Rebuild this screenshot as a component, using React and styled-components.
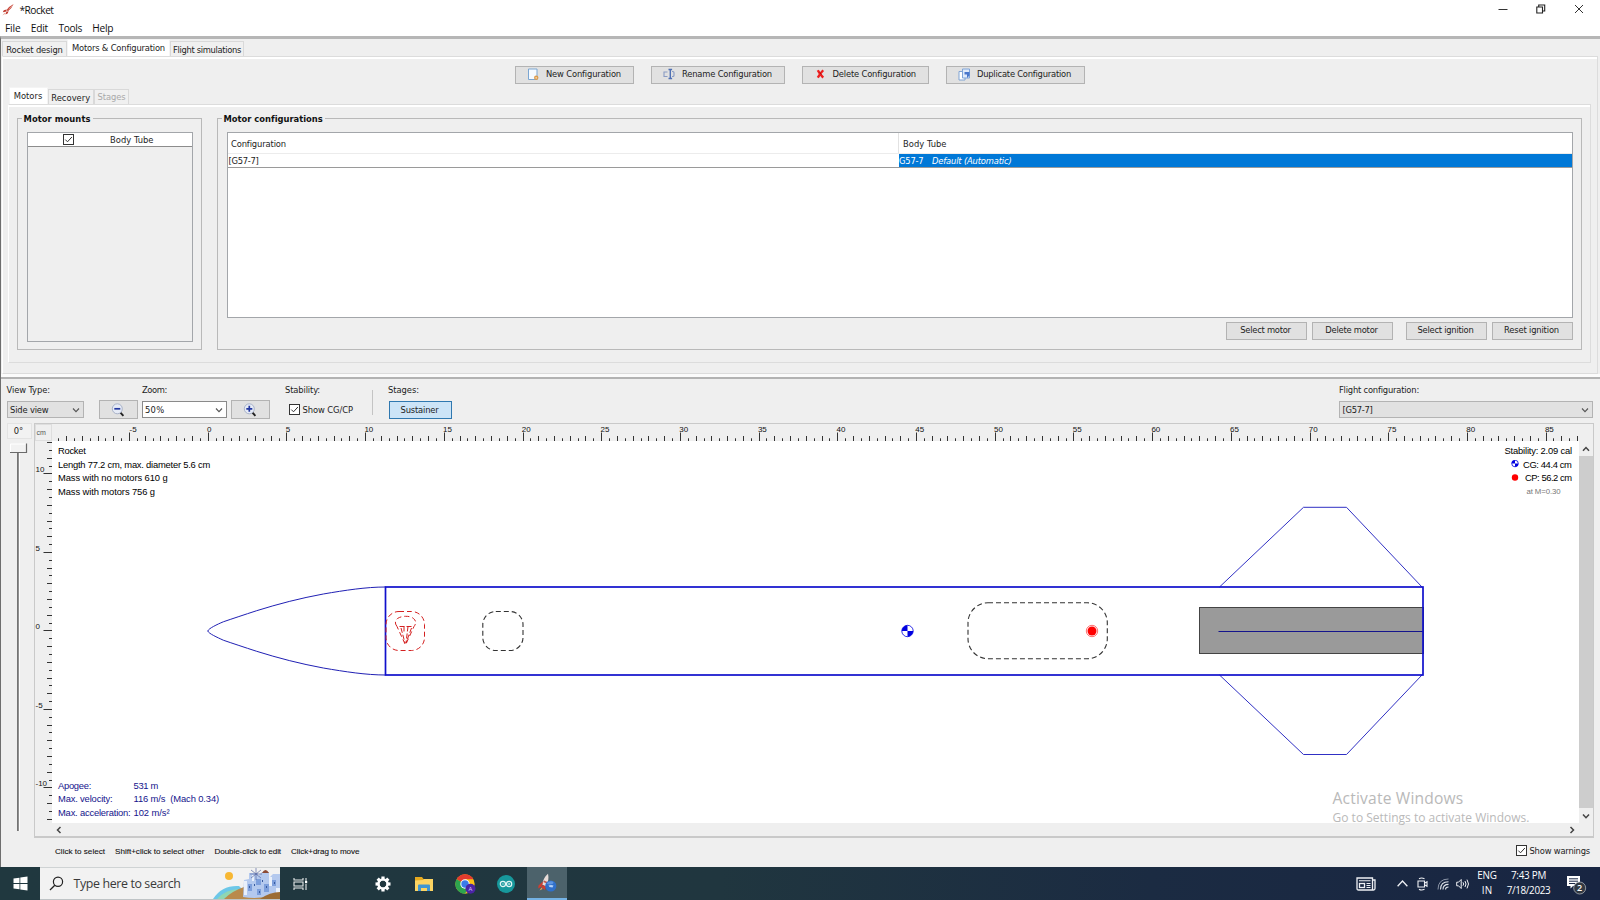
import React, { useLayoutEffect, useRef } from "react";
import styled, { createGlobalStyle, css } from "styled-components";

const UI = `"DejaVu Sans Condensed", "DejaVu Sans", sans-serif`;
const SEGOE = `"Open Sans", "Noto Sans", sans-serif`;
const ARIAL = `"Liberation Sans", Arial, sans-serif`;

const Global = createGlobalStyle`
  * { box-sizing: border-box; }
  html, body { margin: 0; padding: 0; overflow: hidden; }
  body { background: #efefef; }
  svg { display: block; flex: none; }
`;

/* ---------- text fitted to a fixed advance width ---------- */
const FitSpan = styled.span`
  display: inline-block;
  white-space: pre;
  flex: none;
`;
function Fit({ w, children }) {
  const ref = useRef(null);
  useLayoutEffect(() => {
    const el = ref.current;
    el.style.letterSpacing = "0px";
    const natural = el.getBoundingClientRect().width;
    el.style.letterSpacing = `${(w - natural) / el.textContent.length}px`;
  }, [w, children]);
  return <FitSpan ref={ref}>{children}</FitSpan>;
}

/* ---------- window frame ---------- */
const Window = styled.div`
  width: 1600px;
  height: 900px;
  display: flex;
  flex-direction: column;
  background: #efefef;
  font: 9.3px/12px ${UI};
  color: #1c1c1c;
  overflow: hidden;
`;
const TitleBar = styled.header`
  height: 19px;
  display: flex;
  align-items: center;
  padding-left: 2px;
  background: #fff;
  font: 10.2px/18px ${SEGOE};
  color: #111;
`;
const TitleText = styled.div`
  margin: 0 0 0 5.5px;
  flex: 1;
`;
const WindowButtons = styled.div`
  display: flex;
  gap: 28px;
  padding: 0 16px 2px 0;
`;
const MenuBar = styled.nav`
  height: 17px;
  display: flex;
  align-items: center;
  background: #fff;
  padding-left: 5px;
  font: 10.2px/16px ${SEGOE};
  color: #111;
`;
const MenuItem = styled.span`
  width: ${(p) => p.$w}px;
`;
const Body = styled.main`
  height: 831px;
  border-top: 3px solid #b6b6b6;
  border-left: 1px solid #6e6e6e;
  display: flex;
  flex-direction: column;
`;

/* ---------- tabs ---------- */
const TabStrip = styled.div`
  display: flex;
  align-items: flex-end;
  height: ${(p) => p.$h}px;
  padding-left: ${(p) => p.$pl}px;
`;
const Tab = styled.div`
  display: flex;
  align-items: center;
  justify-content: center;
  width: ${(p) => p.$w}px;
  height: ${(p) => (p.$active ? 18 : 15)}px;
  border: 1px solid #d9d9d9;
  border-bottom: 0;
  padding-top: ${(p) => p.$pt || 0}px;
  color: ${(p) => (p.$disabled ? "#a9a9a9" : "#1c1c1c")};
  background: #f0f0f0;
  ${(p) =>
    p.$active &&
    css`
      background: #fff;
      border-color: #f4f4f4;
      margin-bottom: -1px;
      padding-bottom: 1px;
    `}
`;
const Pane = styled.section`
  border: 1px solid #dcdcdc;
  border-left-color: #fff;
  box-shadow: inset 0 2px 0 #fff;
  margin: ${(p) => p.$m};
  height: ${(p) => p.$h}px;
  display: flex;
  flex-direction: column;
`;

/* ---------- controls ---------- */
const ButtonRow = styled.div`
  display: flex;
  gap: 17px;
  padding: 9px 0 0 512px;
  height: 31px;
`;
const Button = styled.button`
  font: inherit;
  color: inherit;
  margin: 0;
  padding: 0 ${(p) => p.$pr || 0}px 0 ${(p) => p.$pl || 0}px;
  width: ${(p) => p.$w}px;
  height: ${(p) => p.$h || 18}px;
  display: flex;
  flex: none;
  align-items: center;
  justify-content: ${(p) => (p.$pl ? "space-between" : "center")};
  background: #e1e1e1;
  border: 1px solid #b3b3b3;
  ${(p) => p.$flat && "padding-bottom: 2px;"}
  ${(p) =>
    p.$on &&
    css`
      background: #cce4f7;
      border-color: #2f78b0;
      padding-right: 2px;
    `}
`;
const Groups = styled.div`
  display: flex;
  padding: 13px 0 0 8px;
`;
const Group = styled.fieldset`
  margin: 0 ${(p) => p.$mr || 0}px 0 0;
  padding: 0;
  width: ${(p) => p.$w}px;
  height: 232px;
  min-width: 0;
  border: 1px solid #b9b9b9;
  position: relative;
  display: block;
`;
const GroupTitle = styled.div`
  position: absolute;
  top: -6px;
  left: 3.5px;
  padding: 0 2px;
  background: #efefef;
  font-weight: bold;
  color: #111;
`;
const MountTable = styled.div`
  margin: 13px 0 0 9px;
  width: 166px;
  height: 210px;
  border: 1px solid #a3a6aa;
`;
const MountRow = styled.div`
  height: 14px;
  background: #fff;
  border-bottom: 1px solid #8c8c8c;
  display: flex;
  align-items: center;
  padding-left: 35px;
  gap: 36px;
`;
const ConfigTable = styled.div`
  margin: 13px 0 0 9px;
  width: 1346px;
  height: 186px;
  background: #fff;
  border: 1px solid #a3a6aa;
`;
const ConfigRow = styled.div`
  display: grid;
  grid-template-columns: 671px 1fr;
  height: ${(p) => p.$h}px;
  border-bottom: 1px solid ${(p) => p.$line};
`;
const Cell = styled.div`
  display: flex;
  align-items: center;
  padding-left: ${(p) => p.$pl}px;
  padding-top: ${(p) => p.$pt || 0}px;
  gap: 8.5px;
  border-right: ${(p) => (p.$rule ? "1px solid #e2e2e2" : "0")};
  background: ${(p) => (p.$selected ? "#0078d7" : "transparent")};
  color: ${(p) => (p.$selected ? "#fff" : "inherit")};
`;
const MotorButtons = styled.div`
  display: flex;
  justify-content: flex-end;
  gap: 5px;
  padding: 4px 8px 0 0;
`;
const Gap = styled.div`
  width: ${(p) => p.$w}px;
`;
const Combo = styled.div`
  width: ${(p) => p.$w}px;
  height: 17px;
  display: flex;
  align-items: center;
  justify-content: space-between;
  padding: 0 3px 0 2.5px;
  border: 1px solid ${(p) => (p.$edit ? "#8a8a8a" : "#b3b3b3")};
  background: ${(p) => (p.$edit ? "#fff" : "#e1e1e1")};
`;
const CheckLabel = styled.label`
  display: flex;
  align-items: center;
  gap: 2.5px;
`;

/* ---------- lower half ---------- */
const Splitter = styled.div`
  height: 5px;
  background: #fbfbfb;
  border-bottom: 2px solid #b3b3b3;
`;
const Toolbar = styled.div`
  height: 44px;
  display: flex;
  padding: 5px 7px 0 5.5px;
`;
const Field = styled.div`
  width: ${(p) => p.$w}px;
  display: flex;
  flex-direction: column;
  align-items: flex-start;
`;
const FieldLabel = styled.div`
  height: 12px;
  padding-left: ${(p) => p.$pl || 0}px;
`;
const FieldRow = styled.div`
  height: 27px;
  display: flex;
  align-items: center;
  gap: 4px;
  padding-left: ${(p) => p.$pl || 0}px;
`;
const Divider = styled.div`
  width: 1px;
  height: 25px;
  background: #c4c4c4;
  margin: 6px 15px 0 0;
`;
const Viewer = styled.div`
  display: flex;
  height: 415px;
`;
const RotationColumn = styled.div`
  width: 33px;
  padding-left: 5.5px;
`;
const AngleBox = styled.div`
  width: 25px;
  height: 16px;
  border: 1px solid #e3e3e3;
  display: flex;
  align-items: center;
  justify-content: center;
  background: #f2f2f2;
  margin-bottom: 4px;
  padding-right: 1px;
`;
const Scroller = styled.div`
  width: 1560px;
  height: 415px;
  border: 1px solid #c9c9c9;
  border-bottom-width: 2px;
  display: grid;
  grid-template-columns: 17px 1527px 1fr;
  grid-template-rows: 17px 382px 13px;
`;
const Corner = styled.div`
  border: 1px solid #dedede;
  font: 7px/14px ${ARIAL};
  padding: 0.5px 0 0 0.5px;
  color: #555;
`;
const HRulerSlot = styled.div`
  grid-column: 2 / 4;
`;
const Canvas = styled.div`
  position: relative;
  background: #fff;
  font: 9.4px/13px ${ARIAL};
  color: #000;
`;
const InfoBlock = styled.div`
  position: absolute;
  left: 6px;
  top: ${(p) => p.$top}px;
  color: ${(p) => p.$color || "#000"};
`;
const InfoLine = styled.div`
  height: 13.6px;
  display: flex;
`;
const InfoKey = styled.span`
  width: 75.5px;
`;
const StabilityBlock = styled.div`
  position: absolute;
  right: 7px;
  top: 3px;
`;
const StabilityLine = styled.div`
  height: 13.6px;
  display: flex;
  align-items: center;
  justify-content: flex-end;
  gap: ${(p) => p.$gap || 0}px;
  padding-right: ${(p) => p.$pr || 0}px;
  ${(p) => p.$small && "font-size: 7.8px; color: #777;"}
`;
const Watermark = styled.div`
  position: absolute;
  left: 1280.5px;
  top: 346px;
  z-index: 2;
  color: #b9b9b9;
  font-family: ${SEGOE};
`;
const WatermarkTitle = styled.div`
  font-size: 15.6px;
  line-height: 22px;
`;
const WatermarkText = styled.div`
  font-size: 12px;
  line-height: 17px;
`;
const VBar = styled.div`
  display: flex;
  flex-direction: column;
  align-items: stretch;
`;
const ArrowCell = styled.div`
  height: ${(p) => p.$h}px;
  display: flex;
  align-items: center;
  justify-content: center;
`;
const Thumb = styled.div`
  flex: 1;
  background: #cdcdcd;
`;
const HBar = styled.div`
  grid-column: 2 / 4;
  display: flex;
  align-items: center;
  justify-content: space-between;
  padding: 0 17px 0 2.5px;
`;
const StatusBar = styled.footer`
  height: 28px;
  display: flex;
  justify-content: space-between;
  align-items: center;
  padding: 0 10px 3px 54px;
`;
const Hints = styled.div`
  display: flex;
  gap: 10px;
  font: 8.1px/12px ${ARIAL};
  color: #111;
  padding-top: 3px;
  -webkit-text-stroke: 0.1px #111;
`;

/* ---------- taskbar ---------- */
const Taskbar = styled.div`
  height: 33px;
  display: flex;
  background: linear-gradient(90deg, #20383f 0%, #20363f 45%, #1b2b42 72%, #182542 100%);
  color: #fff;
  font: 9.9px/15px ${SEGOE};
`;
const TaskCell = styled.div`
  width: ${(p) => p.$w}px;
  height: 33px;
  display: flex;
  align-items: center;
  justify-content: center;
  flex: none;
  padding: ${(p) => p.$pt || 0}px 0 0 ${(p) => p.$pl || 0}px;
  ${(p) =>
    p.$active &&
    css`
      background: #4c626b;
      border-bottom: 2px solid #74b2e4;
    `}
`;
const SearchBox = styled.div`
  width: 240px;
  height: 33px;
  background: #f2f2f2;
  border-top: 1px solid #cfd3d4;
  border-bottom: 1px solid #bfc4c6;
  display: flex;
  align-items: center;
  padding-left: 9px;
  color: #3a3a3a;
  font: 12.4px/20px ${SEGOE};
  flex: none;
`;
const SearchText = styled.div`
  width: 140px;
  padding: 1px 0 0 9.5px;
`;
const Spacer = styled.div`
  flex: 1;
`;
const Stack = styled.div`
  width: ${(p) => p.$w}px;
  display: flex;
  flex-direction: column;
  align-items: center;
  padding-top: 1px;
`;

/* ---------- icons ---------- */
const Check = () => (
  <svg width="11" height="11" viewBox="0 0 11 11">
    <rect x=".5" y=".5" width="10" height="10" fill="#fff" stroke="#333" />
    <path d="M2.3 5.6 4.5 7.8 8.9 3" fill="none" stroke="#333" strokeWidth="1" />
  </svg>
);
const Chevron = ({ dir = "down", s = 8, c = "#555", sw = 1.1 }) => {
  const d = {
    down: "M1 2.5 4 5.7 7 2.5",
    up: "M1 5.7 4 2.5 7 5.7",
    left: "M5.5 1 2.5 4 5.5 7",
    right: "M2.5 1 5.5 4 2.5 7",
  }[dir];
  return (
    <svg width={s} height={s} viewBox="0 0 8 8">
      <path d={d} fill="none" stroke={c} strokeWidth={sw} />
    </svg>
  );
};
const RocketSmall = () => (
  <svg width="12" height="13" viewBox="0 0 12 13">
    <path d="M11.600 1Q7.500 3 4.600 7L6 8.300Q9.800 5.400 11.600 1Z" fill="#c9493c" />
    <path d="M4.600 6.400 1.800 7.200.8 9.300 4.400 8.500ZM6.600 8.200 5.600 10.600 3.400 11.400 4.400 8.800Z" fill="#c03a2e" />
    <path d="M3 9.600.3 12.400 3.800 10.600Z" fill="#e8a090" />
    <path d="M10.300 2.700 6.800 6.200" stroke="#e8b0a8" strokeWidth=".7" />
  </svg>
);
const NewIcon = () => (
  <svg width="12" height="13" viewBox="0 0 12 13">
    <path d="M1.500 1h8.500v10.500H1.500Z" fill="#f6faff" stroke="#7ba6d2" />
    <circle cx="9.200" cy="9.800" r="2.200" fill="#dc9c50" />
    <circle cx="9.200" cy="9.800" r=".9" fill="#f6d8a8" />
  </svg>
);
const RenameIcon = () => (
  <svg width="12" height="12" viewBox="0 0 12 12">
    <path d="M4.500 4H1v4.500h3.500M9 3.500h.8q1.200 0 1.200 1v3q0 1-1.200 1H9" fill="none" stroke="#8a9cc4" strokeWidth="1.100" />
    <path d="M5.500 1.500h3.600M5.500 10.500h3.600M7.300 1.500v9" fill="none" stroke="#4f70b4" strokeWidth="1.400" />
  </svg>
);
const DeleteIcon = () => (
  <svg width="9" height="10" viewBox="0 0 9 10">
    <path d="M1.800 1.200Q3.300 4.500 7.200 8.600M7.200 1.200Q4 4.500 1.800 8.600" fill="none" stroke="#ee2020" strokeWidth="2.300" />
    <path d="M3.800 3.500 5.400 5.500" stroke="#a81010" strokeWidth="1" />
  </svg>
);
const DuplicateIcon = () => (
  <svg width="13" height="13" viewBox="0 0 13 13">
    <path d="M1 3.500h6V12H1Z" fill="#fff" stroke="#7fa3d4" />
    <path d="M4.500 1h7v9h-7Z" fill="#e0ebfa" stroke="#7ea4d8" />
    <path d="M6.500 4H11.500V7.500L9 10V6.500H6.500Z" fill="#4a78cc" />
  </svg>
);
const ZoomIcon = ({ plus }) => (
  <svg width="14" height="14" viewBox="0 0 14 14">
    <path d="M9 9.200 12.400 12.800" stroke="#222" strokeWidth="1.900" />
    <circle cx="6.300" cy="5.800" r="5" fill="#e6ebf6" stroke="#a8b2c8" strokeWidth="1" />
    <path d={plus ? "M3.300 5.800h6M6.300 2.800v6" : "M3.300 5.800h6"} stroke="#2338a0" strokeWidth="1.700" />
  </svg>
);
const CgMark = ({ x, y, r }) => (
  <g transform={`translate(${x} ${y})`}>
    <circle r={r} fill="#fff" stroke="#0000e0" strokeWidth=".8" />
    <path d={`M0 0V${-r}A${r} ${r} 0 0 0 ${-r} 0ZM0 0V${r}A${r} ${r} 0 0 0 ${r} 0Z`} fill="#0000e0" />
  </g>
);
const CpMark = ({ x, y, r }) => (
  <g transform={`translate(${x} ${y})`}>
    <circle r={r} fill="#fff" stroke="#f33" strokeWidth=".7" />
    <circle r={r - 1.2} fill="#f00" />
  </g>
);

/* ---------- rulers ---------- */
const CM = 15.74;
const range = (a, b) => Array.from({ length: b - a + 1 }, (_, i) => a + i);
const rulerFont = { fontFamily: "Liberation Sans", fontSize: 8, fill: "#111" };

const HRuler = () => (
  <svg width="1544" height="17" viewBox="52 424 1544 17">
    {range(-19, 174).map((h) => {
      const x = Math.round(207.7 + (h * CM) / 2) + 0.5;
      const top = h % 10 === 0 ? 432.5 : h % 2 === 0 ? 436 : 438.3;
      return <line key={h} x1={x} x2={x} y1={top} y2="441" stroke="#333" strokeWidth="1" />;
    })}
    {range(-1, 17).map((n) => (
      <text key={n} x={(n < 0 ? 208.3 : 207) + n * 5 * CM} y="431.5" {...rulerFont}>
        {n * 5}
      </text>
    ))}
  </svg>
);
const VRuler = () => (
  <svg width="17" height="382" viewBox="35 441 17 382">
    {range(-24, 24).map((h) => {
      const y = Math.round(630.4 - (h * 15.7) / 2) + 0.5;
      const left = h % 10 === 0 ? 43.5 : h % 2 === 0 ? 47 : 49;
      return <line key={h} x1={left} x2="52" y1={y} y2={y} stroke="#333" strokeWidth="1" />;
    })}
    {range(-2, 2).map((n) => (
      <text key={n} x="35.5" y={629.3 - n * 5 * 15.7} {...rulerFont}>
        {n * 5}
      </text>
    ))}
  </svg>
);

/* ---------- rocket side view ---------- */
const RocketDrawing = () => (
  <svg width="1527" height="382" viewBox="52 441 1527 382">
    <path
      d="M385.500 587C366 587 345 590.300 323.300 594C300 598.300 278 604 256.700 610.700C244 614.800 233 618.500 223.300 621.800C217 624.500 209 628.200 207.700 631C209 633.800 217 637.200 223.300 640.200C233 643.500 244 647.200 256.700 651.300C278 658 300 663.700 323.300 668C345 671.700 366 675 385.500 675"
      fill="none"
      stroke="#2020b4"
      strokeWidth="1"
    />
    <g fill="none" stroke="#3030c4" strokeWidth="1">
      <path d="M1219.500 587 1303.500 507.300H1346.500L1422 587" />
      <path d="M1219.500 675 1303.500 754.500H1346.500L1422 675" />
    </g>
    <rect x="1199.500" y="607.500" width="224" height="46" fill="#9a9a9a" stroke="#444" />
    <path d="M1218.500 631.500H1423" stroke="#14148c" strokeWidth="1" />
    <rect x="385.500" y="587" width="1037.500" height="88" fill="none" stroke="#1010cc" strokeWidth="1.700" />
    <g fill="none" stroke="#d42020" strokeWidth="1" strokeDasharray="5 3">
      <rect x="386" y="611.500" width="38.500" height="39" rx="13" />
      <path d="M397 626.500Q393.500 622 397.500 618.500Q401 616.300 405.500 616.300Q411 616.300 413.500 618.500Q417.500 622 414 626.500L405.500 645Z" />
      <path d="M399.500 626.500H413M401 628 405 643M404 626.500V633M408 626.500 406 643M411.500 628 406 643" strokeDasharray="5 2" />
    </g>
    <g fill="none" stroke="#333" strokeWidth="1.100" strokeDasharray="5 3">
      <rect x="482.800" y="611.500" width="40.200" height="39" rx="13" />
      <rect x="968" y="602.800" width="139.300" height="55.900" rx="20" />
    </g>
    <CgMark x={907.5} y={631} r={5.7} />
    <CpMark x={1092} y={631} r={5.7} />
  </svg>
);

/* ---------- taskbar drawings ---------- */
const SearchArt = () => (
  <svg width="67" height="31" viewBox="213 868 67 31">
    <circle cx="229" cy="876" r="4" fill="#f7b733" />
    <path d="M213 899Q222 885 239 886L252 899Z" fill="#6cc7e8" />
    <path d="M217 899Q226 889 240 889L250 899Z" fill="#a9e08e" opacity=".6" />
    <path d="M224 899Q232 891 244 887Q262 884 280 892V899Z" fill="#b98a4c" />
    <path d="M243 897 244 880 249 879V873H258V876L262 872H269V878L273 874H280V893Q262 900 243 897Z" fill="#b4c9ee" />
    <path d="M248 884h4v7h-4ZM256 879h5v6h-5ZM264 884h5v8h-5ZM272 880h4v6h-4ZM257 889h4v6h-4Z" fill="#7d9fdc" />
    <path d="M244 881h3v14h-3ZM252 875h2v6h-2ZM269 877h3v9h-3ZM276 888h4v5h-4Z" fill="#e9f0fb" />
    <path d="M249 886h1v2h-1ZM254 884h1v2h-1ZM262 880h1v2h-1ZM266 886h1v2h-1ZM274 882h1v2h-1ZM259 891h1v2h-1Z" fill="#375a9e" />
    <path d="M262 873Q265.500 867 269 873Z" fill="#8c4a34" />
    <path d="M251 870 261 878M261 870 251 878M256 868V880M250 874H262" stroke="#5c6aa0" strokeWidth=".7" />
    <path d="M260 899Q270 892 280 892V899Z" fill="#9c6c34" />
  </svg>
);
const WindowsLogo = () => (
  <svg width="15" height="15" viewBox="0 0 15 15">
    <path d="M.5 2.600 6.500 1.700V7H.5ZM7.300 1.600 14.500.5V7H7.300ZM.5 7.900H6.500v5.300L.5 12.400ZM7.300 7.900h7.200v6.600L7.300 13.400Z" fill="#fff" />
  </svg>
);
const SearchGlass = () => (
  <svg width="15" height="15" viewBox="0 0 15 15">
    <circle cx="9" cy="5.700" r="4.600" fill="none" stroke="#222" strokeWidth="1.200" />
    <path d="M5.800 9.200 1 14" stroke="#222" strokeWidth="1.300" />
  </svg>
);
const TaskView = () => (
  <svg width="15" height="14" viewBox="0 0 15 14">
    <path d="M1 1v2h9V1M1 13v-2h9v2M1 5h9v4H1ZM13 1v3M13 7v6" fill="none" stroke="#e8ecec" strokeWidth="1.100" />
    <rect x="12" y="4" width="2.200" height="2.200" fill="#fff" />
  </svg>
);
const Gear = () => (
  <svg width="16" height="16" viewBox="-8 -8 16 16">
    {range(0, 7).map((i) => (
      <rect key={i} x="-1.600" y="-7.500" width="3.200" height="4" fill="#fff" transform={`rotate(${i * 45})`} />
    ))}
    <circle r="4.600" fill="none" stroke="#fff" strokeWidth="2.400" />
  </svg>
);
const Folder = () => (
  <svg width="18" height="16" viewBox="0 0 18 16">
    <path d="M0 1h7l1.500 2H18v12H0Z" fill="#e6a91f" />
    <path d="M0 4.500 8 4 9 3H18V15H0Z" fill="#fcd462" />
    <path d="M3 15V9.500Q3 8.500 4 8.500H14Q15 8.500 15 9.500V15H12V12H6v3Z" fill="#3f96d2" />
  </svg>
);
const Chrome = () => (
  <svg width="21" height="20" viewBox="0 0 21 20">
    <circle cx="10" cy="10" r="9.700" fill="#fbc116" />
    <path d="M10 10 1.600 5.150A9.700 9.700 0 0 1 18.400 5.150H10Z" fill="#e33b2e" />
    <path d="M10 10 1.600 5.150A9.700 9.700 0 0 0 10 19.700L14.200 12.400Z" fill="#2da44e" />
    <circle cx="10" cy="10" r="4.700" fill="#fff" />
    <circle cx="10" cy="10" r="3.700" fill="#3b7be8" />
    <circle cx="15.500" cy="14.800" r="5" fill="#4b24a4" />
    <text x="15.500" y="17" fontFamily="Open Sans" fontSize="6" fill="#d8c8ff" textAnchor="middle">A</text>
  </svg>
);
const Arduino = () => (
  <svg width="18" height="18" viewBox="0 0 18 18">
    <circle cx="9" cy="9" r="9" fill="#17989c" />
    <circle cx="5.900" cy="9" r="2.600" fill="none" stroke="#e3f5f5" strokeWidth="1.200" />
    <circle cx="12.100" cy="9" r="2.600" fill="none" stroke="#e3f5f5" strokeWidth="1.200" />
    <path d="M4.900 9h2M11.100 9h2M12.100 8v2" stroke="#e3f5f5" strokeWidth=".7" />
  </svg>
);
const OpenRocket = () => (
  <svg width="20" height="20" viewBox="0 0 20 20">
    <path d="M11 .8Q6.500 4.500 5 11.500L9 13.500Q12.500 7.500 11 .8Z" fill="#e8dcd8" />
    <path d="M5.800 8.500 1.500 12.500 1.200 15.500 5.500 13ZM5 11.500 9 13.500 8 17 4.500 14.500Z" fill="#cf3d30" />
    <path d="M7 7.500 10.500 9 9.700 10.500 6.200 9Z" fill="#c05a50" />
    <path d="M4.500 14.500 2.500 17.500 5.500 16Z" fill="#f0a050" />
    <circle cx="13.800" cy="13" r="5.600" fill="#2f6fca" />
    <path d="M9.500 10.500Q12 7.600 15.500 8.500 17.500 9.600 15.500 11 12 12 9.500 10.500Z" fill="#5c94e2" />
    <path d="M11.500 12.500Q14 11.500 16.500 12.500L15.500 14.500 12.500 14Z" fill="#b4d0f6" />
  </svg>
);
const News = () => (
  <svg width="20" height="14" viewBox="0 0 20 14">
    <path d="M1 1h15.500v12H2.500Q1 13 1 11.500ZM16.500 3H19v8.500Q19 13 17.500 13H16" fill="none" stroke="#eef0f4" strokeWidth="1.300" />
    <path d="M3 3.800h11.500M10.500 6.500h4M10.500 8.500h4M10.500 10.500h4" stroke="#eef0f4" strokeWidth="1.100" />
    <rect x="3.500" y="6.500" width="5" height="4" fill="none" stroke="#eef0f4" strokeWidth="1.300" />
  </svg>
);
const MeetNow = () => (
  <svg width="11" height="14" viewBox="0 0 11 14">
    <path d="M1 4h6.500v6H1ZM7.500 6.200 10 4.800v4.400L7.500 7.800M2 1.800Q4.500.3 7.500 1.800M2 12.200Q4.500 13.700 7.500 12.200" fill="none" stroke="#eef0f4" strokeWidth="1.100" />
  </svg>
);
const Wifi = () => (
  <svg width="12" height="12" viewBox="0 0 12 12">
    <path d="M1 11.500Q1 1 11.500 1" fill="none" stroke="#8a94a6" strokeWidth="1" />
    <path d="M3.500 11.500Q3.500 3.700 11.500 3.700M6 11.500Q6 6.400 11.500 6.400M8.500 11.500Q8.500 9 11.500 9" fill="none" stroke="#e0e4ea" strokeWidth="1.100" />
  </svg>
);
const Volume = () => (
  <svg width="14" height="12" viewBox="0 0 14 12">
    <path d="M.7 4.200H2.500L5.200 1.500v9L2.500 7.800H.7ZM7 4.300Q8.300 6 7 7.700M9 3Q11 6 9 9M11 1.600Q14 6 11 10.400" fill="none" stroke="#eef0f4" strokeWidth="1" />
  </svg>
);
const ActionCenter = () => (
  <svg width="21" height="20" viewBox="0 0 21 20">
    <path d="M1 1h13v10H7l-2.500 2.500V11H1Z" fill="#fff" />
    <path d="M3 3.800h9M3 6.200h9M3 8.500h6" stroke="#1a2744" strokeWidth="1" />
    <circle cx="13.700" cy="13" r="6" fill="#333941" stroke="#aab0b8" strokeWidth=".8" />
    <text x="13.700" y="16.300" fontFamily="Open Sans" fontSize="9" fontWeight="600" fill="#fff" textAnchor="middle">2</text>
  </svg>
);

/* ---------- page ---------- */
export default function App() {
  return (
    <Window>
      <Global />
      <TitleBar>
        <RocketSmall />
        <TitleText><Fit w={34}>*Rocket</Fit></TitleText>
        <WindowButtons>
          <svg width="10" height="10" viewBox="0 0 10 10"><path d="M.5 5.500H9.500" stroke="#333" /></svg>
          <svg width="10" height="10" viewBox="0 0 10 10"><path d="M.8 3h5.700v6H.8ZM2.700 3V1h6v6H6.500" fill="none" stroke="#222" strokeWidth="1.100" /></svg>
          <svg width="10" height="10" viewBox="0 0 10 10"><path d="M1 1 9 9M9 1 1 9" stroke="#333" /></svg>
        </WindowButtons>
      </TitleBar>
      <MenuBar>
        <MenuItem $w={25.8}><Fit w={15.5}>File</Fit></MenuItem>
        <MenuItem $w={27.7}><Fit w={17}>Edit</Fit></MenuItem>
        <MenuItem $w={33.7}><Fit w={23.5}>Tools</Fit></MenuItem>
        <MenuItem $w={30}><Fit w={21}>Help</Fit></MenuItem>
      </MenuBar>

      <Body>
        <TabStrip $h={17} $pl={1}>
          <Tab $w={65} $pt={1}><Fit w={56.5}>Rocket design</Fit></Tab>
          <Tab $w={103} $active><Fit w={93}>Motors &amp; Configuration</Fit></Tab>
          <Tab $w={74} $pt={1}><Fit w={68}>Flight simulations</Fit></Tab>
        </TabStrip>
        <Pane $m="0 2px 0 1px" $h={318}>
          <ButtonRow>
            <Button $w={119} $pl={11} $pr={12} $flat><NewIcon /><Fit w={75}>New Configuration</Fit></Button>
            <Button $w={134} $pl={11} $pr={12} $flat><RenameIcon /><Fit w={90}>Rename Configuration</Fit></Button>
            <Button $w={127} $pl={13} $pr={12} $flat><DeleteIcon /><Fit w={83.5}>Delete Configuration</Fit></Button>
            <Button $w={139} $pl={11} $pr={13} $flat><DuplicateIcon /><Fit w={94}>Duplicate Configuration</Fit></Button>
          </ButtonRow>
          <TabStrip $h={16} $pl={5.5}>
            <Tab $w={39} $active><Fit w={28.5}>Motors</Fit></Tab>
            <Tab $w={46.5} $pt={2}><Fit w={39}>Recovery</Fit></Tab>
            <Tab $w={35} $disabled><Fit w={28}>Stages</Fit></Tab>
          </TabStrip>
          <Pane $m="0 6px 0 5px" $h={259}>
            <Groups>
              <Group $w={185} $mr={15}>
                <GroupTitle><Fit w={67}>Motor mounts</Fit></GroupTitle>
                <MountTable>
                  <MountRow><Check /><Fit w={43.5}>Body Tube</Fit></MountRow>
                </MountTable>
              </Group>
              <Group $w={1365}>
                <GroupTitle><Fit w={99}>Motor configurations</Fit></GroupTitle>
                <ConfigTable>
                  <ConfigRow $h={21} $line="#ececec">
                    <Cell $pl={3} $pt={2} $rule><Fit w={55}>Configuration</Fit></Cell>
                    <Cell $pl={4} $pt={2}><Fit w={43.5}>Body Tube</Fit></Cell>
                  </ConfigRow>
                  <ConfigRow $h={14} $line="#9a9a9a">
                    <Cell $pl={0.5}><Fit w={30}>[G57-7]</Fit></Cell>
                    <Cell $pl={0} $selected><Fit w={24.5}>G57-7</Fit><i><Fit w={79.5}>Default (Automatic)</Fit></i></Cell>
                  </ConfigRow>
                </ConfigTable>
                <MotorButtons>
                  <Button $w={81} $pr={2} $flat><Fit w={50.5}>Select motor</Fit></Button>
                  <Button $w={81} $pr={2} $flat><Fit w={52.5}>Delete motor</Fit></Button>
                  <Gap $w={3} />
                  <Button $w={81} $pr={2} $flat><Fit w={56}>Select ignition</Fit></Button>
                  <Button $w={81} $pr={2} $flat><Fit w={55}>Reset ignition</Fit></Button>
                </MotorButtons>
              </Group>
            </Groups>
          </Pane>
        </Pane>

        <Splitter />
        <Toolbar>
          <Field $w={92}>
            <FieldLabel><Fit w={43.5}>View Type:</Fit></FieldLabel>
            <FieldRow>
              <Combo $w={77}><Fit w={38.5}>Side view</Fit><Chevron /></Combo>
            </FieldRow>
          </Field>
          <Field $w={186}>
            <FieldLabel $pl={43.5}><Fit w={25}>Zoom:</Fit></FieldLabel>
            <FieldRow>
              <Button $w={39} $h={19}><ZoomIcon /></Button>
              <Combo $w={85} $edit><Fit w={19.5}>50%</Fit><Chevron /></Combo>
              <Button $w={39} $h={19}><ZoomIcon plus /></Button>
            </FieldRow>
          </Field>
          <Field $w={87}>
            <FieldLabel $pl={0.5}><Fit w={35}>Stability:</Fit></FieldLabel>
            <FieldRow $pl={4.5}>
              <CheckLabel><Check /><Fit w={50.5}>Show CG/CP</Fit></CheckLabel>
            </FieldRow>
          </Field>
          <Divider />
          <Field $w={100}>
            <FieldLabel $pl={0.5}><Fit w={31}>Stages:</Fit></FieldLabel>
            <FieldRow $pl={1.5}>
              <Button $w={63} $h={18} $on><Fit w={38}>Sustainer</Fit></Button>
            </FieldRow>
          </Field>
          <Spacer />
          <Field $w={254}>
            <FieldLabel><Fit w={80}>Flight configuration:</Fit></FieldLabel>
            <FieldRow>
              <Combo $w={254}><Fit w={30}>[G57-7]</Fit><Chevron /></Combo>
            </FieldRow>
          </Field>
        </Toolbar>

        <Viewer>
          <RotationColumn>
            <AngleBox><Fit w={9.5}>0°</Fit></AngleBox>
            <svg width="26" height="390" viewBox="7 443 26 390">
              <path d="M18 450V831" stroke="#555" strokeWidth="1.600" />
              <path d="M19.300 453V831" stroke="#fff" strokeWidth="1" />
              <rect x="10" y="443.500" width="16.500" height="9" fill="#f2f2f2" />
              <path d="M10.500 452V444H26" fill="none" stroke="#fff" />
              <path d="M10 452.500H26.500V443.500" fill="none" stroke="#6a6a6a" strokeWidth="1.200" />
            </svg>
          </RotationColumn>
          <Scroller>
            <Corner>cm</Corner>
            <HRulerSlot><HRuler /></HRulerSlot>
            <VRuler />
            <Canvas>
              <RocketDrawing />
              <InfoBlock $top={3.3}>
                <InfoLine><Fit w={27.5}>Rocket</Fit></InfoLine>
                <InfoLine><Fit w={152}>Length 77.2 cm, max. diameter 5.6 cm</Fit></InfoLine>
                <InfoLine><Fit w={109.5}>Mass with no motors 610 g</Fit></InfoLine>
                <InfoLine><Fit w={97}>Mass with motors 756 g</Fit></InfoLine>
              </InfoBlock>
              <InfoBlock $top={337.8} $color="#14148c">
                <InfoLine><InfoKey><Fit w={33}>Apogee:</Fit></InfoKey><Fit w={24.5}>531 m</Fit></InfoLine>
                <InfoLine><InfoKey><Fit w={54.5}>Max. velocity:</Fit></InfoKey><Fit w={85.5}>116 m/s  (Mach 0.34)</Fit></InfoLine>
                <InfoLine><InfoKey><Fit w={72.5}>Max. acceleration:</Fit></InfoKey><Fit w={36}>102 m/s²</Fit></InfoLine>
              </InfoBlock>
              <StabilityBlock>
                <StabilityLine><Fit w={67.5}>Stability: 2.09 cal</Fit></StabilityLine>
                <StabilityLine $gap={4} $pr={0.5}>
                  <svg width="8" height="8" viewBox="0 0 8 8"><CgMark x={4} y={3.5} r={3.3} /></svg>
                  <Fit w={48.5}>CG: 44.4 cm</Fit>
                </StabilityLine>
                <StabilityLine $gap={6} $pr={0.5}>
                  <svg width="8" height="8" viewBox="0 0 8 8"><circle cx="4" cy="3.500" r="3.200" fill="#f00" /></svg>
                  <Fit w={46.5}>CP: 56.2 cm</Fit>
                </StabilityLine>
                <StabilityLine $small $pr={11.5}><Fit w={34}>at M=0.30</Fit></StabilityLine>
              </StabilityBlock>
              <Watermark>
                <WatermarkTitle><Fit w={131}>Activate Windows</Fit></WatermarkTitle>
                <WatermarkText><Fit w={197}>Go to Settings to activate Windows.</Fit></WatermarkText>
              </Watermark>
            </Canvas>
            <VBar>
              <ArrowCell $h={15}><Chevron dir="up" c="#444" sw={1.5} /></ArrowCell>
              <Thumb />
              <ArrowCell $h={15}><Chevron c="#444" sw={1.5} /></ArrowCell>
            </VBar>
            <div />
            <HBar>
              <Chevron dir="left" c="#444" sw={1.5} />
              <Chevron dir="right" c="#444" sw={1.5} />
            </HBar>
          </Scroller>
        </Viewer>
        <StatusBar>
          <Hints>
            <Fit w={50}>Click to select</Fit>
            <Fit w={89.5}>Shift+click to select other</Fit>
            <Fit w={66.5}>Double-click to edit</Fit>
            <Fit w={68.5}>Click+drag to move</Fit>
          </Hints>
          <CheckLabel><Check /><Fit w={60.5}>Show warnings</Fit></CheckLabel>
        </StatusBar>
      </Body>

      <Taskbar>
        <TaskCell $w={40}><WindowsLogo /></TaskCell>
        <SearchBox>
          <SearchGlass />
          <SearchText><Fit w={107}>Type here to search</Fit></SearchText>
          <Spacer />
          <SearchArt />
        </SearchBox>
        <TaskCell $w={40}><TaskView /></TaskCell>
        <Gap $w={43} />
        <TaskCell $w={40}><Gear /></TaskCell>
        <TaskCell $w={42}><Folder /></TaskCell>
        <TaskCell $w={40}><Chrome /></TaskCell>
        <TaskCell $w={42}><Arduino /></TaskCell>
        <TaskCell $w={40} $active><OpenRocket /></TaskCell>
        <Spacer />
        <TaskCell $w={42} $pl={2}><News /></TaskCell>
        <TaskCell $w={31} $pl={2}><Chevron dir="up" s={13} c="#eef0f4" sw={0.8} /></TaskCell>
        <TaskCell $w={10}><MeetNow /></TaskCell>
        <TaskCell $w={32}><Wifi /></TaskCell>
        <TaskCell $w={7}><Volume /></TaskCell>
        <Stack $w={42}><Fit w={19.5}>ENG</Fit><Fit w={10.5}>IN</Fit></Stack>
        <Stack $w={41}><Fit w={35}>7:43 PM</Fit><Fit w={43.5}>7/18/2023</Fit></Stack>
        <TaskCell $w={51} $pl={3} $pt={2}><ActionCenter /></TaskCell>
      </Taskbar>
    </Window>
  );
}
